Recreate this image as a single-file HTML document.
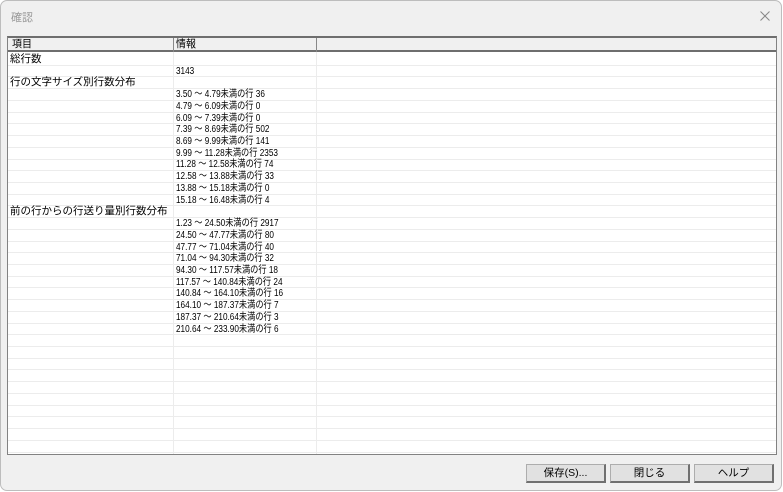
<!DOCTYPE html>
<html><head><meta charset="utf-8"><style>
*{margin:0;padding:0;box-sizing:border-box}
body{width:783px;height:492px;background:#fff;font-family:"Liberation Sans","Noto Sans CJK JP",sans-serif;position:relative;overflow:hidden}
.win{position:absolute;left:0;top:0;width:782px;height:491px;background:#f0f0f0;border:1px solid #bdbdbd;border-radius:7px}
.title{position:absolute;left:10px;top:8px;font-size:11px;color:#999}
.x{position:absolute;right:11px;top:10px}
.list{position:absolute;left:6px;top:35px;width:770px;height:419px;background:#fff;border:1px solid #828282;border-top:2px solid #6e6e6e;overflow:hidden}
.hdr{position:absolute;left:0;top:0;width:100%;height:14px;background:#f0f0f0;border-bottom:2px solid #6e6e6e;font-size:10.5px;line-height:13px}
.hdr span{position:absolute;top:0;transform:scaleX(.95);transform-origin:left}
.vl{position:absolute;top:0;width:1px;background:#888}
.gl{position:absolute;top:14px;bottom:0;width:1px;background:#ececec}
.row{position:absolute;left:0;width:100%;height:11.75px;border-bottom:1px solid #ececec;font-size:10px;line-height:11px;color:#000}
.row span{position:absolute;top:0;white-space:nowrap;transform:scaleX(.82);transform-origin:left}
.row span.a{transform:none;font-size:10.5px;line-height:11px}
.btn{position:absolute;top:463px;width:80px;height:19px;background:#e1e1e1;border:1px solid #adadad;border-right:2px solid #707070;border-bottom:2px solid #707070;font-size:10.5px;text-align:center;line-height:16px}
</style></head><body>
<div class="win">
<div class="title">確認</div>
<svg class="x" width="10" height="10" viewBox="0 0 10 10"><path d="M0.5 0.5L9.5 9.5M9.5 0.5L0.5 9.5" stroke="#888" stroke-width="1"/></svg>
<div class="list">
<div class="hdr"><span style="left:4px">項目</span><span style="left:168px">情報</span>
<div class="vl" style="left:165px;height:14px"></div><div class="vl" style="left:308px;height:14px"></div></div>
<div class="gl" style="left:165px"></div><div class="gl" style="left:308px"></div>
<div id="rows"></div>
</div>
<div class="btn" style="left:525px">保存(S)...</div>
<div class="btn" style="left:609px">閉じる</div>
<div class="btn" style="left:693px">ヘルプ</div>
</div>
<script>
var d=[["総行数",""],["","3143"],["行の文字サイズ別行数分布",""],
["","3.50 ～ 4.79未満の行 36"],["","4.79 ～ 6.09未満の行 0"],["","6.09 ～ 7.39未満の行 0"],["","7.39 ～ 8.69未満の行 502"],["","8.69 ～ 9.99未満の行 141"],["","9.99 ～ 11.28未満の行 2353"],["","11.28 ～ 12.58未満の行 74"],["","12.58 ～ 13.88未満の行 33"],["","13.88 ～ 15.18未満の行 0"],["","15.18 ～ 16.48未満の行 4"],
["前の行からの行送り量別行数分布",""],
["","1.23 ～ 24.50未満の行 2917"],["","24.50 ～ 47.77未満の行 80"],["","47.77 ～ 71.04未満の行 40"],["","71.04 ～ 94.30未満の行 32"],["","94.30 ～ 117.57未満の行 18"],["","117.57 ～ 140.84未満の行 24"],["","140.84 ～ 164.10未満の行 16"],["","164.10 ～ 187.37未満の行 7"],["","187.37 ～ 210.64未満の行 3"],["","210.64 ～ 233.90未満の行 6"]];
var h="";for(var i=0;i<35;i++){var r=d[i]||["",""];h+='<div class="row" style="top:'+(16+i*11.72)+'px"><span class="a" style="left:2px">'+r[0]+'</span><span style="left:168px">'+r[1]+'</span></div>';}
document.getElementById("rows").outerHTML=h;
</script>
</body></html>
